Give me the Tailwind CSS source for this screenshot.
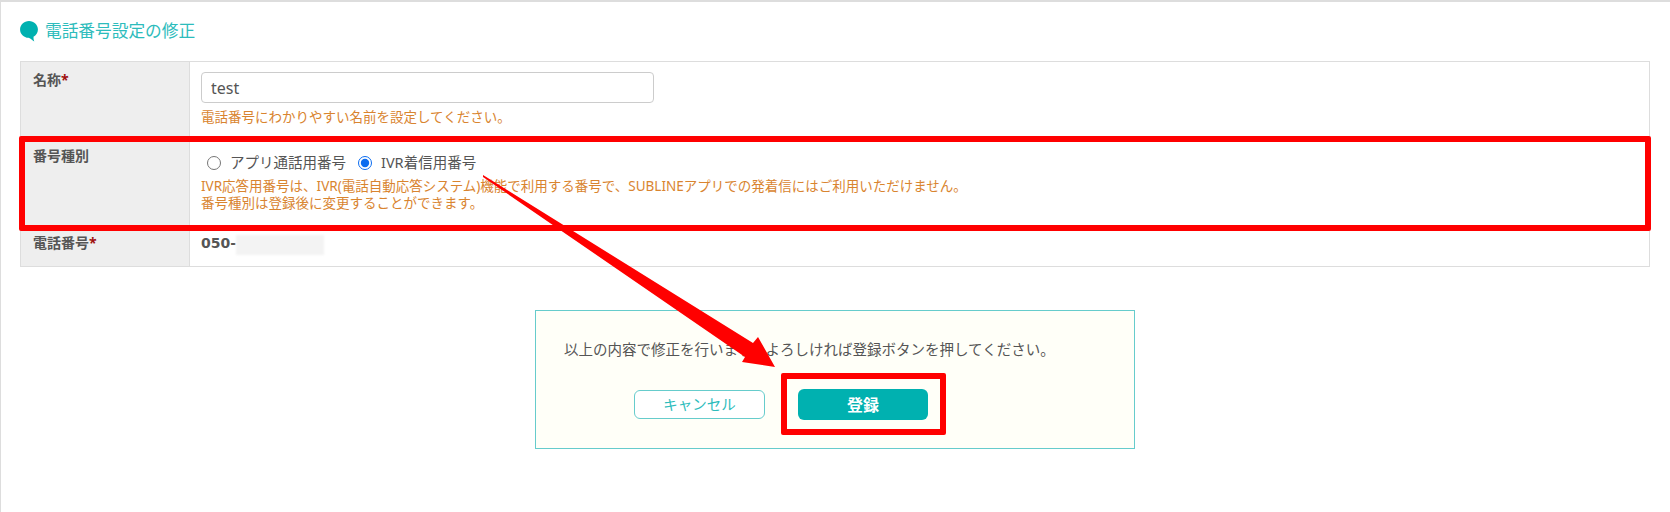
<!DOCTYPE html>
<html lang="ja">
  <head>
    <meta charset="UTF-8" />
    <title>電話番号設定の修正</title>
    <script src="https://cdn.jsdelivr.net/npm/@tailwindcss/browser@4"></script>
  </head>
  <body class="bg-white">
    <div class="relative w-[1670px] h-[512px] overflow-hidden border-t-2 border-l border-[#dddddd] text-[#555555] font-['Noto_Sans','Noto_Sans_CJK_JP',sans-serif]">
      <!-- title -->
      <div class="flex items-center gap-[7px] pl-[19px] h-[59px]">
        <svg width="18" height="21" viewBox="0 0 17 20">
          <path d="M8.500 0C3.800 0 0 3.600 0 8c0 4.300 3.500 7.700 8 8 1.500.3 3 1.700 5.500 3.600-.6-1.500-.9-3-.7-4.500C15.300 13.700 17 11 17 8c0-4.400-3.800-8-8.500-8z" fill="#00b1b0" />
        </svg>
        <h1 class="text-[16.700px] leading-none text-[#2dbcbc]">電話番号設定の修正</h1>
      </div>

      <!-- form table -->
      <div class="ml-[19px] w-[1630px] border border-[#dddddd] text-[14px]">
        <div class="flex h-[75px] border-b border-[#dddddd]">
          <div class="w-[169px] shrink-0 bg-[#eeeeee] border-r border-[#dddddd] pl-[12px] pt-[6px] font-bold leading-[24px]">
            名称<span class="text-[#a01010]">*</span>
          </div>
          <div class="pl-[11px] pt-[10px]">
            <input type="text" value="test" class="block w-[453px] h-[31px] border border-[#cccccc] rounded-[4px] px-[9px] text-[16px] text-[#555555] bg-white" />
            <p class="mt-[4px] text-[13.500px] leading-[20px] text-[#d9842f]">電話番号にわかりやすい名前を設定してください。</p>
          </div>
        </div>
        <div class="flex h-[94px] border-b border-[#dddddd]">
          <div class="w-[169px] shrink-0 bg-[#eeeeee] border-r border-[#dddddd] pl-[12px] pt-[7px] font-bold leading-[24px]">番号種別</div>
          <div class="pl-[11px] pt-[15px]">
            <div class="flex items-center h-[22px] text-[14.500px] pl-[6px]">
              <input type="radio" name="kind" class="w-[14px] h-[14px] m-0" />
              <span class="ml-[9px]">アプリ通話用番号</span>
              <input type="radio" name="kind" checked class="w-[14px] h-[14px] ml-[12px] mr-[9px] accent-[#0b6cf0]" />
              <span>IVR着信用番号</span>
            </div>
            <p class="mt-[4px] text-[13.500px] leading-[17px] text-[#d9842f]">
              IVR応答用番号は、IVR(電話自動応答システム)機能で利用する番号で、SUBLINEアプリでの発着信にはご利用いただけません。<br />
              番号種別は登録後に変更することができます。
            </p>
          </div>
        </div>
        <div class="flex h-[35px]">
          <div class="w-[169px] shrink-0 bg-[#eeeeee] border-r border-[#dddddd] pl-[12px] font-bold leading-[24px]">
            電話番号<span class="text-[#a01010]">*</span>
          </div>
          <div class="flex items-start pl-[11px] font-bold leading-[24px] font-['DejaVu_Sans']">
            050-<span class="mt-[4px] w-[88px] h-[20px] bg-[#f3f3f3] blur-[1px]"></span>
          </div>
        </div>
      </div>

      <!-- confirm box -->
      <div class="ml-[534px] mt-[43px] w-[600px] h-[139px] border border-[#66cccc] bg-[#fffff8] pt-[26px] pl-[28px]">
        <p class="text-[14.500px] leading-[24px]">以上の内容で修正を行います。よろしければ登録ボタンを押してください。</p>
        <div class="flex items-center mt-[28px] pl-[70px] gap-[33px]">
          <button class="w-[131px] h-[29px] border border-[#66cccc] rounded-[6px] bg-white text-[14.500px] text-[#2dbcbc]">キャンセル</button>
          <button class="w-[130px] h-[31px] rounded-[6px] bg-[#00b1b0] text-[16px] font-bold text-white">登録</button>
        </div>
      </div>

      <!-- annotations -->
      <div class="absolute left-[18px] top-[134px] w-[1632px] h-[95px] border-[6px] border-[#ff0000] rounded-[2px]"></div>
      <div class="absolute left-[780px] top-[371px] w-[165px] h-[62px] border-[6px] border-[#ff0000] rounded-[2px]"></div>
      <svg class="absolute left-0 top-0" width="1670" height="512" viewBox="0 0 1670 512">
        <polygon points="482,173 752,341 757,335 774,365 741,360 744,355 482,175" fill="#ff0000" />
      </svg>
    </div>
  </body>
</html>
